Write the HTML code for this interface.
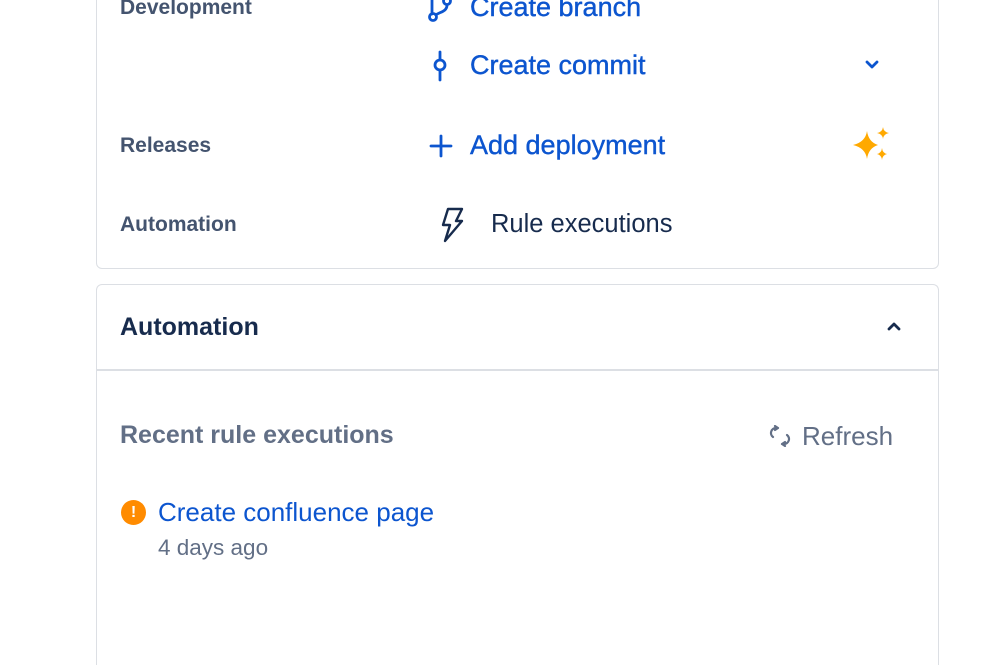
<!DOCTYPE html>
<html style="height:665px;overflow:hidden"><head><style>
html,body{margin:0;width:999px;height:665px;overflow:hidden}
body{background:#fff;position:relative;font-family:"Liberation Sans",sans-serif}
.wrap{position:absolute;left:0;top:0;width:999px;height:665px;overflow:hidden}
.a{position:absolute;white-space:nowrap;line-height:1}
.card{position:absolute;border:1.5px solid #DCDFE4;border-radius:6px;box-sizing:border-box}
.lbl{font-size:21px;font-weight:bold;color:#44546F}
.lnk{font-size:27px;color:#0C55CF;-webkit-text-stroke:0.4px #0C55CF}
</style></head><body><div class="wrap">
<div class="card" style="left:96px;top:-20px;width:843px;height:289px"></div>
<div class="card" style="left:96px;top:284px;width:843px;height:381px;border-bottom:none;border-radius:6px 6px 0 0"></div>
<div class="a" style="left:97px;top:369px;width:842px;height:1.5px;background:#DCDFE4"></div>

<div class="a lbl" style="left:120px;top:-3px">Development</div>
<div class="a lbl" style="left:120px;top:135px">Releases</div>
<div class="a lbl" style="left:120px;top:214px">Automation</div>

<svg class="a" style="left:426px;top:-8px" width="30" height="32" viewBox="0 0 30 32" fill="none" stroke="#0C55CF" stroke-width="2.8" stroke-linecap="round"><path d="M6 2v20"/><circle cx="7" cy="25" r="3.5"/><circle cx="21" cy="9" r="3.5"/><path d="M21 13c0 7-8 7-11 10"/></svg>
<div class="a lnk" style="left:470px;top:-6px">Create branch</div>

<svg class="a" style="left:430px;top:50px" width="20" height="32" viewBox="0 0 20 32" fill="none" stroke="#0C55CF" stroke-width="2.8" stroke-linecap="round"><path d="M10 2v8M10 20v10"/><circle cx="10" cy="15" r="5"/></svg>
<div class="a lnk" style="left:470px;top:52px">Create commit</div>
<svg class="a" style="left:864px;top:59px" width="16" height="12" viewBox="0 0 16 12" fill="none" stroke="#0C55CF" stroke-width="2.8" stroke-linecap="round" stroke-linejoin="round"><path d="M3 3l5 5 5-5"/></svg>

<svg class="a" style="left:429px;top:134px" width="24" height="24" viewBox="0 0 24 24" stroke="#0C55CF" stroke-width="2.8" stroke-linecap="round"><path d="M12 2v20M2 12h20"/></svg>
<div class="a lnk" style="left:470px;top:132px">Add deployment</div>
<svg class="a" style="left:852px;top:126px" width="40" height="40" viewBox="0 0 40 40" fill="#FFA900"><path d="M15 5Q16.5 16 26 19Q16.5 22 15 33Q13.5 22 1 19Q13.5 16 15 5Z"/><path d="M31 1Q31.5 6 37 7Q31.5 8 31 13Q30.5 8 25 7Q30.5 6 31 1Z"/><path d="M30 22Q30.5 27 35 28Q30.5 29 30 34Q29.5 29 25 28Q29.5 27 30 22Z"/></svg>

<svg class="a" style="left:440px;top:207px" width="26" height="36" viewBox="0 0 26 36" fill="none" stroke="#172B4D" stroke-width="2.4" stroke-linejoin="round"><path d="M8 2h14l-6 12h6L5 34l5-16H3z"/></svg>
<div class="a" style="left:491px;top:212px;font-size:25.5px;color:#172B4D">Rule executions</div>

<div class="a" style="left:120px;top:315px;font-size:25px;font-weight:bold;color:#172B4D">Automation</div>
<svg class="a" style="left:886px;top:320px" width="16" height="12" viewBox="0 0 16 12" fill="none" stroke="#172B4D" stroke-width="2.8" stroke-linecap="round" stroke-linejoin="round"><path d="M3 9l5-5 5 5"/></svg>

<div class="a" style="left:120px;top:423px;font-size:25px;font-weight:bold;color:#626F86">Recent rule executions</div>
<svg class="a" style="left:768px;top:425px" width="24" height="22" viewBox="0 0 24 22" fill="none" stroke="#626F86" stroke-width="2.2" stroke-linecap="round" stroke-linejoin="round"><path d="M10 3H8a5 5 0 0 0-3 9M7 1l3 2-3 2"/><path d="M14 19h2a5 5 0 0 0 3-9M17 21l-3-2 3-2"/></svg>
<div class="a" style="left:802px;top:423px;font-size:26px;color:#626F86">Refresh</div>

<div class="a" style="left:121px;top:500px;width:25px;height:25px;border-radius:50%;background:#FF8B00;color:#fff;font-size:16px;font-weight:bold;text-align:center;line-height:25px">!</div>
<div class="a" style="left:158px;top:499px;font-size:26px;color:#0C55CF">Create confluence page</div>
<div class="a" style="left:158px;top:537px;font-size:22.5px;color:#626F86">4 days ago</div>
</div></body></html>
